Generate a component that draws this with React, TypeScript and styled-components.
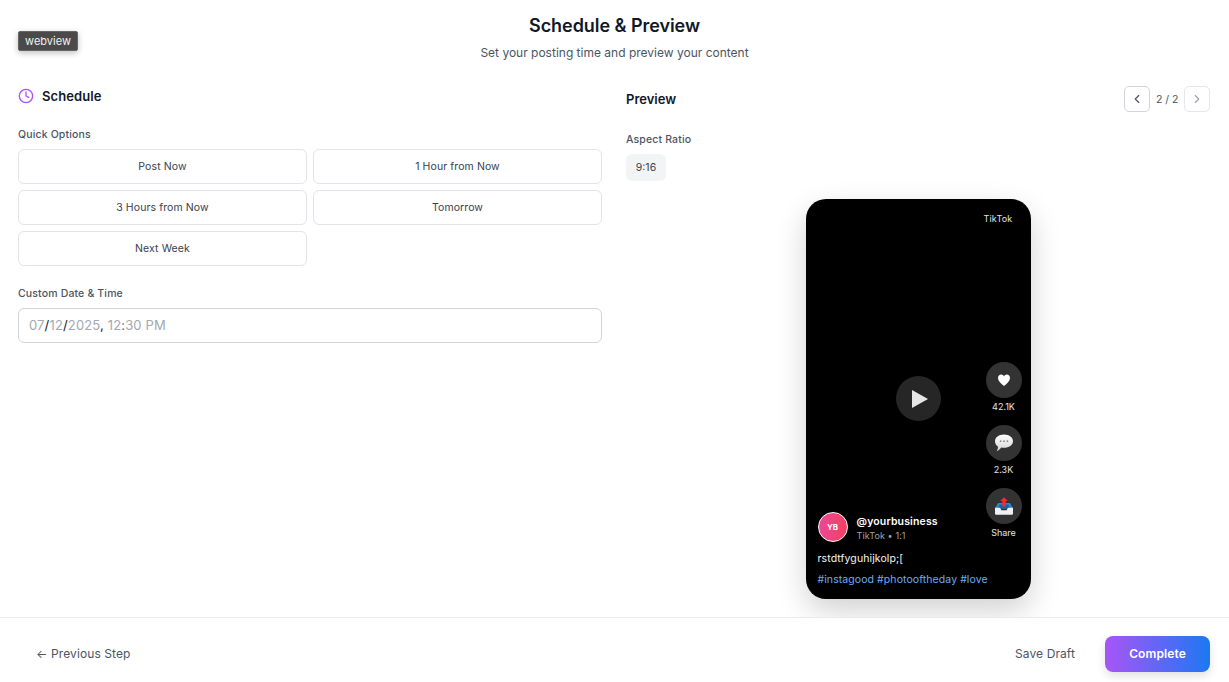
import React from 'react';
import styled, { createGlobalStyle } from 'styled-components';
import { ChevronLeft, ChevronRight, Clock } from 'lucide-react';

const GlobalStyle = createGlobalStyle`
  * { box-sizing: border-box; }
  html, body { margin: 0; padding: 0; background: #fff; }
  body { font-family: Inter, "Liberation Sans", sans-serif; color: #111827; }
`;

const quickOptions = ['Post Now', '1 Hour from Now', '3 Hours from Now', 'Tomorrow', 'Next Week'];

const HeartGlyph = () => (
  <svg width="14" height="14" viewBox="0 0 14 14">
    <path d="M7 13 C3.5 10.2 1 8 1 5 C1 2.9 2.5 1.6 4.1 1.6 C5.4 1.6 6.4 2.3 7 3.4 C7.6 2.3 8.6 1.6 9.9 1.6 C11.5 1.6 13 2.9 13 5 C13 8 10.5 10.2 7 13 Z" fill="#fff" />
  </svg>
);

const BubbleGlyph = () => (
  <svg width="20" height="20" viewBox="0 0 20 20">
    <defs>
      <linearGradient id="bubble" x1="0" y1="0" x2="0" y2="1">
        <stop offset="0" stopColor="#ffffff" />
        <stop offset="1" stopColor="#d4d4d4" />
      </linearGradient>
    </defs>
    <path d="M10 1.5 C15 1.5 19 4.3 19 8.2 C19 12 15 14.8 10 14.8 C9 14.8 8 14.7 7.2 14.5 C6 16.4 4.4 17.6 2.6 18.2 C3.6 16.8 4 15.2 3.9 13.4 C2 12.2 1 10.4 1 8.2 C1 4.3 5 1.5 10 1.5 Z" fill="url(#bubble)" />
    <circle cx="6.6" cy="8.2" r="0.9" fill="#8a8a8a" />
    <circle cx="10" cy="8.2" r="0.9" fill="#8a8a8a" />
    <circle cx="13.4" cy="8.2" r="0.9" fill="#8a8a8a" />
  </svg>
);

const OutboxGlyph = () => (
  <svg width="20" height="20" viewBox="0 0 20 20">
    <path d="M4 7 H16 L19 12.5 H1 Z" fill="#2f86d0" />
    <path d="M5.5 8.6 H14.5 L16 12 H4 Z" fill="#17639f" />
    <path d="M1 11.8 H6 L7.4 14.2 H12.6 L14 11.8 H19 V17.6 Q19 18.8 17.8 18.8 H2.2 Q1 18.8 1 17.6 Z" fill="#edf1f5" />
    <path d="M10 1.2 L13.8 5 H11.7 V10.4 H8.3 V5 H6.2 Z" fill="#e5342b" />
  </svg>
);

const App: React.FC = () => {
  return (
    <Page>
      <GlobalStyle />
      <WebviewTag>webview</WebviewTag>
      <Header>
        <Title>Schedule &amp; Preview</Title>
        <Subtitle>Set your posting time and preview your content</Subtitle>
      </Header>
      <Main>
        <div>
          <SectionHead>
            <Clock size={16} color="#a855f7" strokeWidth={2} />
            <SectionTitle>Schedule</SectionTitle>
          </SectionHead>
          <FieldLabel>Quick Options</FieldLabel>
          <OptionGrid>
            {quickOptions.map((option) => (
              <OptionButton key={option}>{option}</OptionButton>
            ))}
          </OptionGrid>
          <CustomLabel>Custom Date &amp; Time</CustomLabel>
          <DateBox>
            07<Sep>/</Sep>12<Sep>/</Sep>2025<Sep>,</Sep>&nbsp;12<Colon>:</Colon>30 PM
          </DateBox>
        </div>
        <div>
          <PreviewHead>
            <PreviewTitle>Preview</PreviewTitle>
            <Pager>
              <PagerButton>
                <ChevronLeft size={14} color="#4b5563" />
              </PagerButton>
              <PagerText>2 / 2</PagerText>
              <PagerButton disabled>
                <ChevronRight size={14} color="#9ca3af" />
              </PagerButton>
            </Pager>
          </PreviewHead>
          <RatioLabel>Aspect Ratio</RatioLabel>
          <RatioChip>9:16</RatioChip>
          <PhoneWrap>
            <Phone>
              <PlatformName>TikTok</PlatformName>
              <PlayButton>
                <svg width="16" height="18" viewBox="0 0 16 18">
                  <path d="M0 0 L16 9 L0 18 Z" fill="#e5e5e5" />
                </svg>
              </PlayButton>
              <ActionRail>
                <Action>
                  <ActionCircle><HeartGlyph /></ActionCircle>
                  <ActionLabel>42.1K</ActionLabel>
                </Action>
                <Action>
                  <ActionCircle><BubbleGlyph /></ActionCircle>
                  <ActionLabel>2.3K</ActionLabel>
                </Action>
                <Action>
                  <ActionCircle><OutboxGlyph /></ActionCircle>
                  <ActionLabel>Share</ActionLabel>
                </Action>
              </ActionRail>
              <Caption>
                <Account>
                  <Avatar>YB</Avatar>
                  <AccountText>
                    <Handle>@yourbusiness</Handle>
                    <AccountMeta>TikTok • 1:1</AccountMeta>
                  </AccountText>
                </Account>
                <CaptionText>rstdtfyguhijkolp;[</CaptionText>
                <Hashtags>#instagood #photooftheday #love</Hashtags>
              </Caption>
            </Phone>
          </PhoneWrap>
        </div>
      </Main>
      <Footer>
        <BackButton>← Previous Step</BackButton>
        <FooterActions>
          <DraftButton>Save Draft</DraftButton>
          <CompleteButton>Complete</CompleteButton>
        </FooterActions>
      </Footer>
    </Page>
  );
};

const Page = styled.div`
  width: 1229px;
  height: 682px;
  display: flex;
  flex-direction: column;
  overflow: hidden;
  position: relative;
  background: #fff;
`;
const WebviewTag = styled.div`
  position: absolute;
  left: 18px;
  top: 31px;
  width: 60px;
  height: 20px;
  background: #4a4a4a;
  border: 1px solid #666;
  border-radius: 2px;
  box-shadow: 0 2px 6px rgba(0, 0, 0, 0.25);
  color: #f0f0f0;
  font-size: 11px;
  line-height: 18px;
  text-align: center;
`;
const Header = styled.header`
  height: 86px;
  padding-top: 15px;
  text-align: center;
`;
const Title = styled.h1`
  margin: 0;
  font-size: 18px;
  line-height: 22px;
  font-weight: 600;
  color: #111827;
  letter-spacing: -0.05px;
`;
const Subtitle = styled.p`
  margin: 6px 0 0;
  font-size: 12px;
  line-height: 20px;
  color: #4b5563;
`;
const Main = styled.main`
  flex: 1;
  min-height: 0;
  display: grid;
  grid-template-columns: 584px 584px;
  column-gap: 24px;
  padding-left: 18px;
`;
const SectionHead = styled.div`
  display: flex;
  align-items: center;
  gap: 8px;
  height: 20px;
  margin-bottom: 21px;
`;
const SectionTitle = styled.h2`
  margin: 0;
  font-size: 13px;
  line-height: 20px;
  font-weight: 600;
  color: #111827;
  letter-spacing: 0.1px;
`;
const FieldLabel = styled.div`
  font-size: 10.5px;
  line-height: 16px;
  font-weight: 500;
  color: #4b5563;
  margin-bottom: 6px;
  letter-spacing: 0.15px;
`;
const OptionGrid = styled.div`
  display: grid;
  grid-template-columns: 289px 289px;
  gap: 6px;
`;
const OptionButton = styled.button`
  height: 35px;
  padding: 0;
  background: #fff;
  border: 1px solid #e2e4e9;
  border-radius: 6px;
  font-family: inherit;
  font-size: 10.5px;
  color: #374151;
  letter-spacing: 0.1px;
`;
const CustomLabel = styled(FieldLabel)`
  margin-top: 20px;
`;
const DateBox = styled.div`
  height: 35px;
  border: 1px solid #d1d5db;
  border-radius: 6px;
  padding-left: 10px;
  font-size: 13px;
  line-height: 33px;
  color: #a3a8b1;
  letter-spacing: 0.15px;
`;
const Sep = styled.span`
  color: #111827;
`;
const Colon = styled.span`
  color: #6b7280;
`;
const PreviewHead = styled.div`
  display: flex;
  align-items: center;
  justify-content: space-between;
  height: 26px;
  margin-bottom: 20px;
`;
const PreviewTitle = styled.h2`
  margin: 0;
  font-size: 13px;
  line-height: 26px;
  font-weight: 600;
  color: #111827;
`;
const Pager = styled.div`
  display: flex;
  align-items: center;
  gap: 6px;
`;
const PagerButton = styled.button<{ disabled?: boolean }>`
  width: 26px;
  height: 26px;
  padding: 0;
  display: flex;
  align-items: center;
  justify-content: center;
  background: #fff;
  border: 1px solid ${(p) => (p.disabled ? '#e5e7eb' : '#d1d5db')};
  border-radius: 5px;
`;
const PagerText = styled.span`
  font-size: 10.5px;
  color: #4b5563;
  width: 22px;
  text-align: center;
  white-space: nowrap;
`;
const RatioLabel = styled(FieldLabel)`
  margin-bottom: 6px;
`;
const RatioChip = styled.div`
  width: 40px;
  height: 27px;
  border-radius: 6px;
  background: #f3f4f6;
  font-size: 10.5px;
  line-height: 27px;
  text-align: center;
  color: #374151;
`;
const PhoneWrap = styled.div`
  display: flex;
  justify-content: center;
  margin-top: 18px;
`;
const Phone = styled.div`
  position: relative;
  width: 225px;
  height: 400px;
  background: #000;
  border-radius: 20px;
  box-shadow: 0 12px 30px rgba(0, 0, 0, 0.18);
  color: #fff;
`;
const PlatformName = styled.div`
  position: absolute;
  top: 14px;
  right: 18px;
  font-size: 9px;
  line-height: 12px;
  color: #e5e5e5;
  letter-spacing: 0.2px;
`;
const PlayButton = styled.div`
  position: absolute;
  left: 90px;
  top: 177px;
  width: 45px;
  height: 45px;
  border-radius: 50%;
  background: #262626;
  display: flex;
  align-items: center;
  justify-content: center;
  padding-left: 4px;
`;
const ActionRail = styled.div`
  position: absolute;
  right: 9px;
  top: 163px;
  display: flex;
  flex-direction: column;
  align-items: center;
  gap: 11px;
`;
const Action = styled.div`
  width: 36px;
  display: flex;
  flex-direction: column;
  align-items: center;
  gap: 2px;
`;
const ActionCircle = styled.div`
  width: 36px;
  height: 36px;
  border-radius: 50%;
  background: #333;
  display: flex;
  align-items: center;
  justify-content: center;
`;
const ActionLabel = styled.span`
  font-size: 9px;
  line-height: 14px;
  color: #e5e5e5;
  white-space: nowrap;
`;
const Caption = styled.div`
  position: absolute;
  left: 12px;
  bottom: 12px;
`;
const Account = styled.div`
  display: flex;
  align-items: center;
  gap: 9px;
`;
const AccountText = styled.div`
  padding-top: 1px;
  margin-top: 1px;
`;
const Avatar = styled.div`
  width: 30px;
  height: 30px;
  border-radius: 50%;
  border: 1px solid #fff;
  background: linear-gradient(90deg, #ec4899, #f43f5e);
  font-size: 8px;
  font-weight: 700;
  line-height: 28px;
  text-align: center;
`;
const Handle = styled.div`
  font-size: 10.5px;
  line-height: 14px;
  font-weight: 600;
  letter-spacing: 0.15px;
`;
const AccountMeta = styled.div`
  font-size: 9px;
  line-height: 13px;
  color: #a3a3a3;
  letter-spacing: 0.1px;
`;
const CaptionText = styled.div`
  margin-top: 10px;
  font-size: 10.5px;
  line-height: 14px;
  color: #f5f5f5;
  letter-spacing: 0.1px;
`;
const Hashtags = styled.div`
  margin-top: 7px;
  font-size: 10.5px;
  line-height: 14px;
  color: #6aaef5;
  letter-spacing: 0.08px;
`;
const Footer = styled.footer`
  height: 65px;
  flex-shrink: 0;
  border-top: 1px solid #e8eaed;
  display: flex;
  align-items: center;
  justify-content: space-between;
  padding: 7px 19px 0 36px;
  background: #fff;
  position: relative;
`;
const BackButton = styled.button`
  padding: 0;
  background: none;
  border: none;
  font-family: inherit;
  font-size: 12px;
  color: #4b5563;
  letter-spacing: 0.1px;
`;
const FooterActions = styled.div`
  display: flex;
  align-items: center;
  gap: 30px;
`;
const DraftButton = styled(BackButton)``;
const CompleteButton = styled.button`
  width: 105px;
  height: 36px;
  padding: 0;
  border: none;
  border-radius: 8px;
  background: linear-gradient(90deg, #a855f7, #1d78f2);
  box-shadow: 0 4px 10px rgba(0, 0, 0, 0.12);
  font-family: inherit;
  font-size: 12px;
  font-weight: 600;
  color: #fff;
  letter-spacing: 0.1px;
`;

export default App;
